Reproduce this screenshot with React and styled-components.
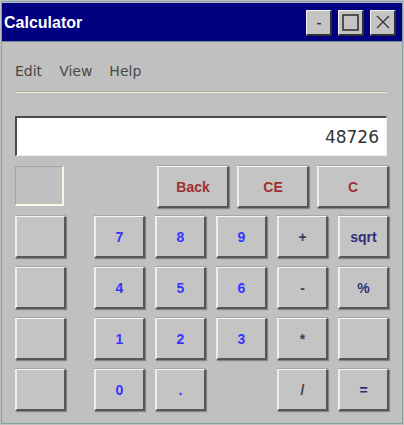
import React from 'react';
import styled, { createGlobalStyle } from 'styled-components';

const GlobalStyle = createGlobalStyle`
	html, body {
		margin: 0;
		padding: 0;
		background: #c0c0c0;
	}
	* {
		box-sizing: border-box;
	}
`;

const keys = [
	['7', '8', '9', '+', 'sqrt'],
	['4', '5', '6', '-', '%'],
	['1', '2', '3', '*', ''],
	['0', '.', null, '/', '='],
];

function kindOf(label) {
	if (/^[0-9.]$/.test(label)) return 'digit';
	if (/^[-+*/]$/.test(label)) return 'basic';
	return 'op';
}

function TitleIcon({ type }) {
	if (type === 'min') {
		return <svg width="10" height="10" viewBox="0 0 10 10"><rect x="3" y="6" width="4" height="1.4" fill="#333"/></svg>;
	}
	if (type === 'max') {
		return <svg width="17" height="17" viewBox="0 0 17 17"><rect x="1" y="1" width="15" height="15" fill="none" stroke="#333" strokeWidth="1.6"/></svg>;
	}
	return (
		<svg width="16" height="16" viewBox="0 0 16 16">
			<path d="M2 2 L14 14 M14 2 L2 14" stroke="#333" strokeWidth="1.3" fill="none"/>
		</svg>
	);
}

export default function App() {
	return (
		<>
			<GlobalStyle/>
			<Frame>
				<Window>
					<TitleBar>
						<Title>Calculator</Title>
						<TitleButtons>
							<TitleButton><TitleIcon type="min"/></TitleButton>
							<TitleButton><TitleIcon type="max"/></TitleButton>
							<TitleButton><TitleIcon type="close"/></TitleButton>
						</TitleButtons>
					</TitleBar>
					<Content>
						<Menu>
							<MenuItem>Edit</MenuItem>
							<MenuItem>View</MenuItem>
							<MenuItem>Help</MenuItem>
						</Menu>
						<Separator/>
						<Display>48726</Display>
						<TopRow>
							<MemoryBox/>
							<ClearKeys>
								<Key tone="clear" wide>Back</Key>
								<Key tone="clear" wide>CE</Key>
								<Key tone="clear" wide>C</Key>
							</ClearKeys>
						</TopRow>
						<Keypad>
							{keys.map((row, r) => (
								<React.Fragment key={r}>
									<Key/>
									{row.map((label, c) => label === null
										? <span key={c}/>
										: <Key key={c} tone={kindOf(label)}>{label}</Key>
									)}
								</React.Fragment>
							))}
						</Keypad>
					</Content>
				</Window>
			</Frame>
		</>
	);
}

const Frame = styled.div`
	width: 404px;
	height: 425px;
	padding: 1px;
	background: #c0c0c0;
`;

const Window = styled.div`
	height: 100%;
	border: 1px solid #7fa2a2;
	display: flex;
	flex-direction: column;
`;

const TitleBar = styled.div`
	margin-top: 1px;
	height: 39px;
	background: #000080;
	border-bottom: 1px solid #6e9090;
	display: flex;
	align-items: center;
	justify-content: space-between;
	padding: 0 6px 0 2px;
`;

const Title = styled.div`
	color: #ffffff;
	font-family: "Liberation Sans", Arial, sans-serif;
	font-weight: bold;
	font-size: 16px;
	margin-top: 1px;
`;

const TitleButtons = styled.div`
	display: flex;
	gap: 6px;
	margin-top: 1px;
`;

const TitleButton = styled.div`
	width: 26px;
	height: 26px;
	background: #c4c4c4;
	border-top: 1px solid #f4f4f4;
	border-left: 1px solid #f4f4f4;
	border-right: 2px solid #303030;
	border-bottom: 2px solid #303030;
	display: flex;
	align-items: center;
	justify-content: center;
`;

const Content = styled.div`
	padding: 0 0 0 13px;
	width: 390px;
`;

const Menu = styled.div`
	display: flex;
	gap: 17px;
	padding-top: 20px;
	line-height: 18px;
`;

const MenuItem = styled.span`
	font-family: "DejaVu Sans", sans-serif;
	font-size: 14px;
	color: #484848;
`;

const Separator = styled.div`
	margin-top: 11px;
	width: 372px;
	height: 2px;
	border-top: 1px solid #aaaaa2;
	border-bottom: 1px solid #f2f2e2;
`;

const Display = styled.div`
	margin-top: 23px;
	width: 372px;
	height: 40px;
	background: #ffffff;
	border-top: 2px solid #4a4a4a;
	border-left: 2px solid #4a4a4a;
	border-right: 1px solid #f0f0f0;
	border-bottom: 1px solid #f0f0f0;
	display: flex;
	align-items: center;
	justify-content: flex-end;
	padding-right: 7px;
	font-family: "DejaVu Sans", sans-serif;
	font-size: 17px;
	color: #333333;
`;

const TopRow = styled.div`
	margin-top: 10px;
	width: 374px;
	display: flex;
	justify-content: space-between;
	align-items: flex-start;
`;

const MemoryBox = styled.div`
	width: 49px;
	height: 40px;
	border-top: 1px solid #a4a49c;
	border-left: 1px solid #a4a49c;
	border-right: 2px solid #f8f6e6;
	border-bottom: 2px solid #f8f6e6;
`;

const ClearKeys = styled.div`
	display: flex;
	gap: 8px;
`;

const toneColors = {
	digit: '#3535ff',
	clear: '#a03030',
	op: '#30307a',
	basic: '#3c3c5c',
};

const Key = styled.button`
	width: ${props => props.wide ? 72 : 51}px;
	height: 42px;
	padding: 0;
	background: #c4c4c4;
	border-top: 1px solid #f6f6f6;
	border-left: 2px solid #eeeeee;
	border-right: 2px solid #565656;
	border-bottom: 2px solid #565656;
	box-shadow: 1px 1px 1px rgba(0, 0, 0, 0.3), 0 -1px 0 #a6a6a6;
	font-family: "Liberation Sans", Arial, sans-serif;
	font-weight: bold;
	font-size: 14px;
	color: ${props => toneColors[props.tone] || '#333'};
	display: flex;
	align-items: center;
	justify-content: center;
`;

const Keypad = styled.div`
	margin-top: 8px;
	display: grid;
	grid-template-columns: 69px repeat(5, 51px);
	grid-auto-rows: 42px;
	column-gap: 10px;
	row-gap: 9px;
`;
